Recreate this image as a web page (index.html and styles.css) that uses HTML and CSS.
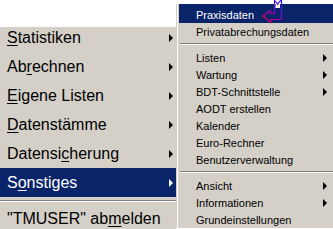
FILE: index.html
```html
<!DOCTYPE html>
<html>
<head>
<meta charset="utf-8">
<link rel="stylesheet" href="styles.css">
</head>
<body>
<div class="screen">
  <div class="left">
    <div class="menu big">
      <div class="item first"><span><u>S</u>tatistiken</span><i class="arrow"></i></div>
      <div class="item"><span>Ab<u>r</u>echnen</span><i class="arrow"></i></div>
      <div class="item"><span><u>E</u>igene Listen</span><i class="arrow"></i></div>
      <div class="item"><span><u>D</u>atenstämme</span><i class="arrow"></i></div>
      <div class="item"><span>Datensi<u>c</u>herung</span><i class="arrow"></i></div>
      <div class="item sel"><span>S<u>o</u>nstiges</span><i class="arrow"></i></div>
      <div class="sep"></div>
      <div class="item"><span>"TMUSER" ab<u>m</u>elden</span></div>
    </div>
  </div>
  <div class="right">
    <div class="menu small">
      <div class="item sel top"><span>Praxisdaten</span></div>
      <div class="item"><span>Privatabrechungsdaten</span></div>
      <div class="sep"></div>
      <div class="item"><span>Listen</span><i class="arrow"></i></div>
      <div class="item"><span>Wartung</span><i class="arrow"></i></div>
      <div class="item"><span>BDT-Schnittstelle</span><i class="arrow"></i></div>
      <div class="item"><span>AODT erstellen</span></div>
      <div class="item"><span>Kalender</span></div>
      <div class="item"><span>Euro-Rechner</span></div>
      <div class="item"><span>Benutzerverwaltung</span></div>
      <div class="sep"></div>
      <div class="item"><span>Ansicht</span><i class="arrow"></i></div>
      <div class="item"><span>Informationen</span><i class="arrow"></i></div>
      <div class="item"><span>Grundeinstellungen</span></div>
    </div>
  </div>
  <svg class="cursor" width="22" height="25" viewBox="0 0 22 25">
    <defs>
      <linearGradient id="g" x1="0" y1="1" x2="1" y2="0">
        <stop offset="0" stop-color="#ff0030"/>
        <stop offset="0.5" stop-color="#a000c0"/>
        <stop offset="1" stop-color="#2020ff"/>
      </linearGradient>
    </defs>
    <path d="M12.5 0.5 L15.5 4 L18.5 0.5 L19.5 0.5 L19.5 19.5 L8.5 19.5 L8.5 22.5 L1 16 L8.5 10.5 L8.5 13.5 L12.5 13.5 Z" fill="none" stroke="url(#g)" stroke-width="1.2"/>
    <path d="M13.5 2 L15.5 5.5 L18 2 L18 8 L13.5 8 Z" fill="#fff" stroke="none"/>
  </svg>
</div>
</body>
</html>
```
FILE: styles.css
```css
html, body {
  margin: 0;
  padding: 0;
  background: #fff;
}
.screen {
  position: relative;
  width: 333px;
  height: 229px;
  overflow: hidden;
  display: flex;
  align-items: flex-start;
  background: #fff;
}
.left {
  width: 176px;
  flex: none;
  padding-top: 27px;
}
.right {
  flex: 1;
  margin-top: 4px;
  border-left: 1px solid #d4d0c8;
  background: #d4d0c8;
}
.menu {
  background: #d4d0c8;
  color: #000;
  display: flex;
  flex-direction: column;
}
.big {
  font-family: "Liberation Sans", Arial, sans-serif;
  font-size: 16px;
}
.big .item {
  height: 29px;
  padding-left: 7px;
  padding-right: 3px;
}
.big .item.first {
  height: 25px;
  padding-bottom: 4px;
}
.item {
  display: flex;
  align-items: center;
  justify-content: space-between;
  box-sizing: border-box;
  white-space: nowrap;
}
.item u {
  text-decoration-thickness: 1px;
  text-underline-offset: 2px;
}
.sel {
  background: #0a246a;
  color: #fff;
}
.arrow {
  width: 0;
  height: 0;
  border-top: 4px solid transparent;
  border-bottom: 4px solid transparent;
  border-left: 4px solid #000;
}
.sel .arrow {
  border-left-color: #fff;
}
.big .sep {
  height: 7px;
  box-sizing: border-box;
  padding-top: 3px;
}
.sep::before {
  content: "";
  display: block;
  height: 1px;
  background: #808080;
  border-bottom: 1px solid #fff;
}
.small {
  font-family: "Liberation Sans", Arial, sans-serif;
  font-size: 11px;
  border-left: 1px solid #fff;
  padding-left: 1px;
}
.small .item {
  height: 17px;
  padding-left: 17px;
  padding-right: 6px;
}
.small .item.top {
  height: 19px;
  padding-top: 3px;
}
.small .sep {
  height: 9px;
  box-sizing: border-box;
  padding-top: 3px;
  margin-left: 1px;
}
.cursor {
  position: absolute;
  left: 262px;
  top: 0;
}
```
